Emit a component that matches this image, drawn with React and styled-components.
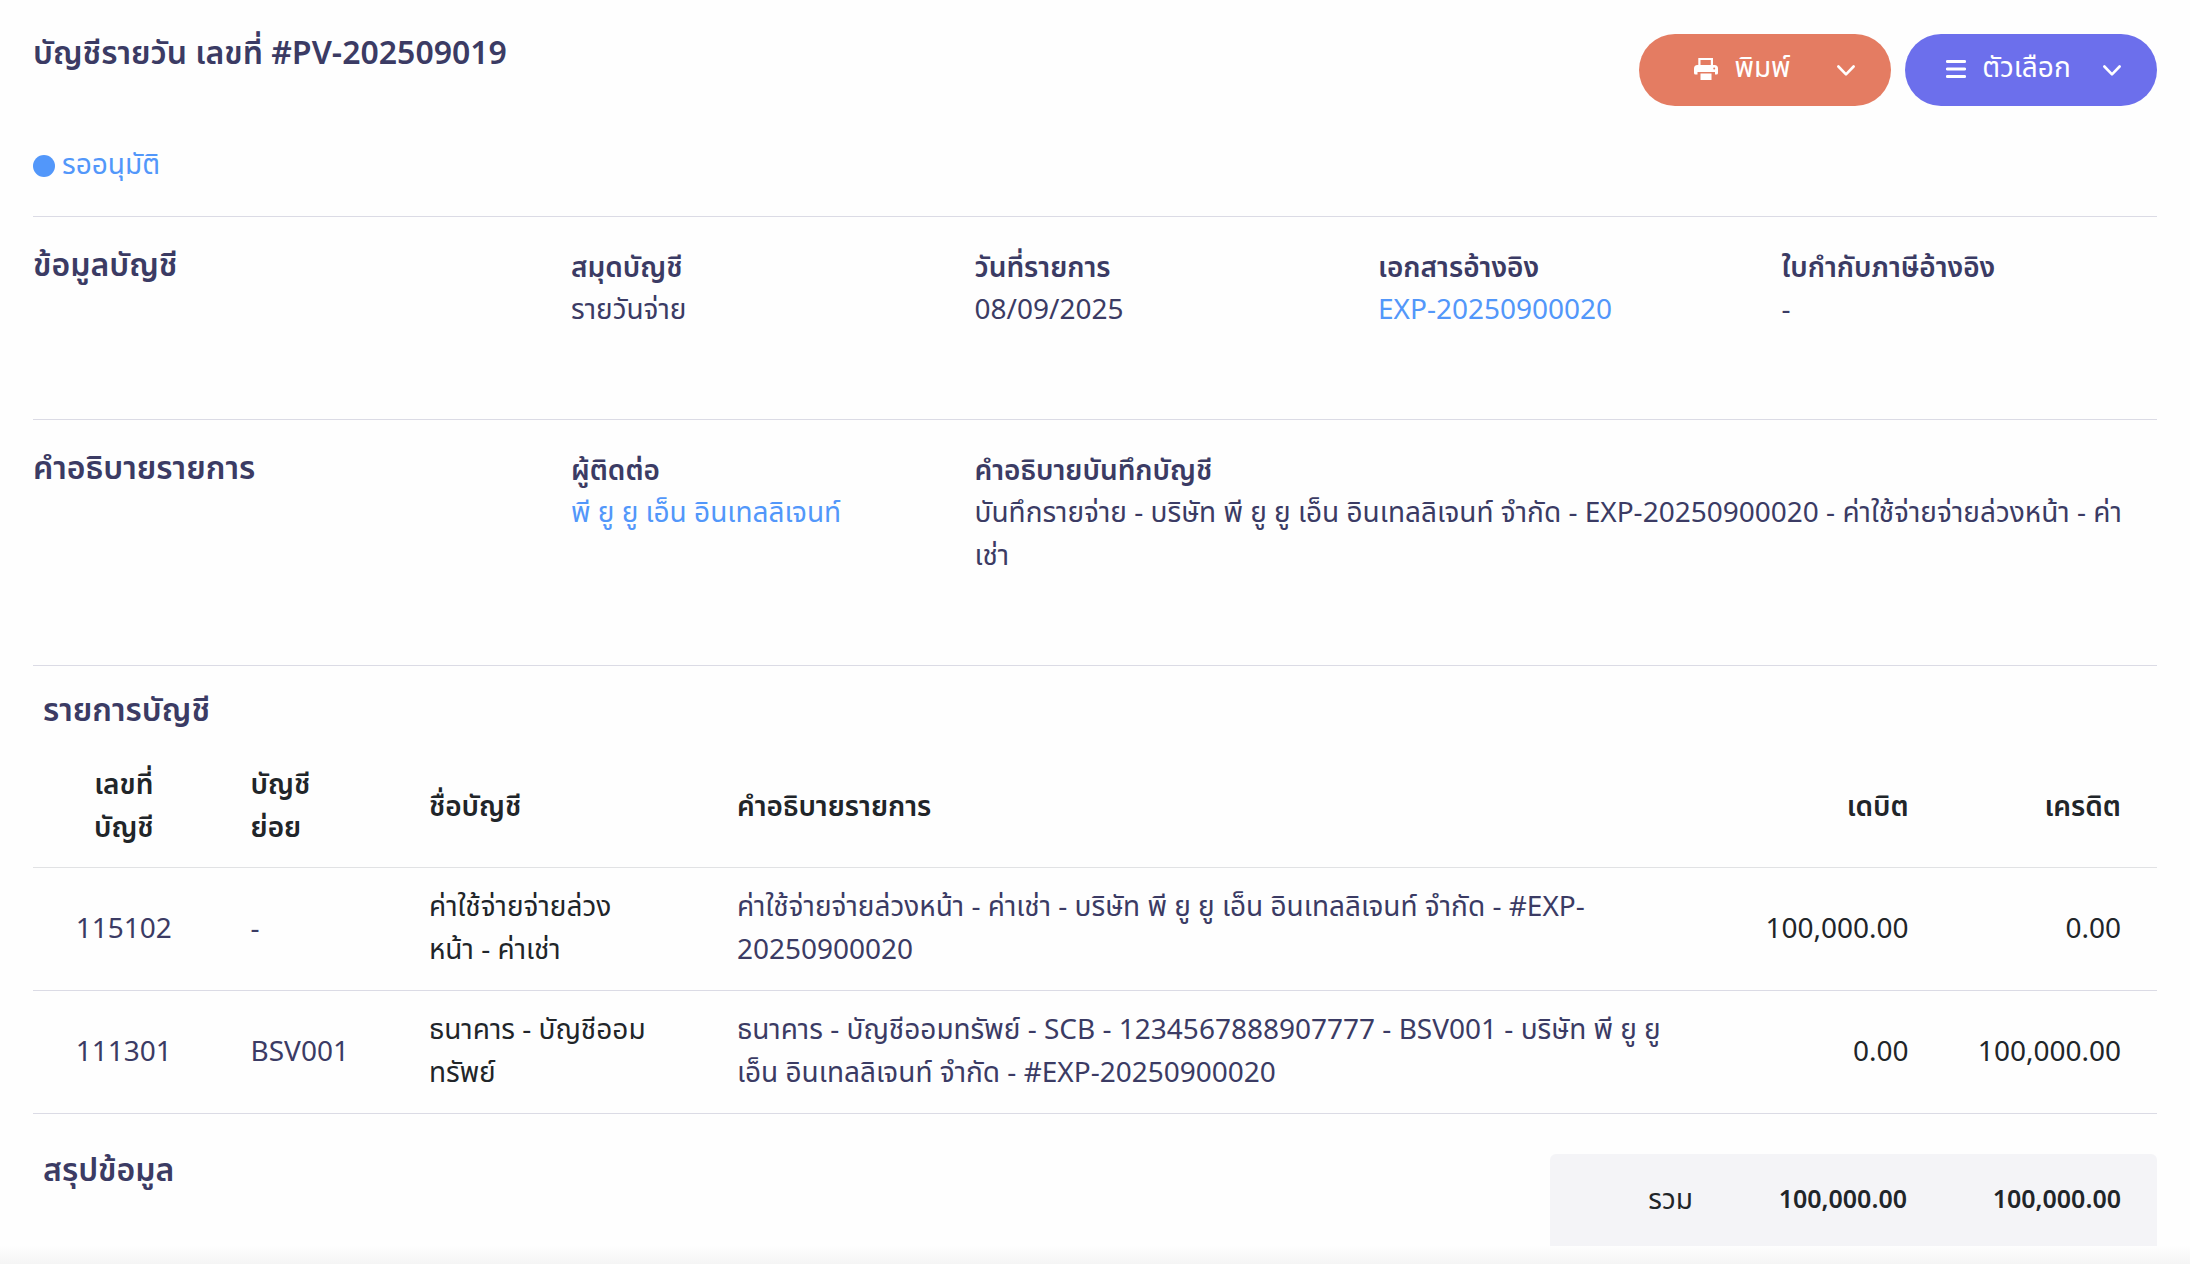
import React from 'react';
import styled, { createGlobalStyle } from 'styled-components';

const fields = [
  { label: 'สมุดบัญชี', value: 'รายวันจ่าย' },
  { label: 'วันที่รายการ', value: '08/09/2025' },
  { label: 'เอกสารอ้างอิง', value: 'EXP-20250900020', link: true },
  { label: 'ใบกำกับภาษีอ้างอิง', value: '-' },
];

const entries = [
  {
    code: '115102',
    sub: '-',
    name: 'ค่าใช้จ่ายจ่ายล่วงหน้า - ค่าเช่า',
    detail:
      'ค่าใช้จ่ายจ่ายล่วงหน้า - ค่าเช่า - บริษัท พี ยู ยู เอ็น อินเทลลิเจนท์ จำกัด - #EXP-20250900020',
    debit: '100,000.00',
    credit: '0.00',
  },
  {
    code: '111301',
    sub: 'BSV001',
    name: 'ธนาคาร - บัญชีออมทรัพย์',
    detail:
      'ธนาคาร - บัญชีออมทรัพย์ - SCB - 1234567888907777 - BSV001 - บริษัท พี ยู ยู เอ็น อินเทลลิเจนท์ จำกัด - #EXP-20250900020',
    debit: '0.00',
    credit: '100,000.00',
  },
];

const PrintIcon = () => (
  <svg width="24" height="22" viewBox="0 0 24 22" aria-hidden="true">
    <path
      fill="currentColor"
      fillRule="evenodd"
      d="M4.3 0H19v7h-2.200V2H6.500v5H4.300zM3.500 7h17A3.500 3.500 0 0 1 24 10.500V15a1.500 1.500 0 0 1-1.500 1.500H21V14H3.500v2.500h-2A1.500 1.500 0 0 1 0 15v-4.500A3.500 3.500 0 0 1 3.500 7zm16.700 2.500a1 1 0 1 0 0 2 1 1 0 0 0 0-2zM6.500 15.500h11V22h-11z"
    />
  </svg>
);

const MenuIcon = () => (
  <svg width="20" height="18" viewBox="0 0 20 18" aria-hidden="true">
    <path
      d="M1.3 1.5h17.400M1.300 9h17.400M1.300 16.500h17.400"
      stroke="currentColor"
      strokeWidth="2.8"
      strokeLinecap="round"
    />
  </svg>
);

const ChevronIcon = () => (
  <svg width="18" height="11" viewBox="0 0 18 11" aria-hidden="true">
    <path
      d="M1.4 1.5 9 9.3l7.6-7.8"
      fill="none"
      stroke="currentColor"
      strokeWidth="2.6"
      strokeLinecap="round"
      strokeLinejoin="round"
    />
  </svg>
);

const App = () => (
  <>
    <GlobalStyle />
    <Page>
      <Header>
        <Title>บัญชีรายวัน เลขที่ #PV-202509019</Title>
        <Actions>
          <ActionButton type="button" $color="#e47c62">
            <ActionText>
              <PrintIcon />
              พิมพ์
            </ActionText>
            <ChevronIcon />
          </ActionButton>
          <ActionButton type="button" $color="#6c6fec">
            <ActionText>
              <MenuIcon />
              ตัวเลือก
            </ActionText>
            <ChevronIcon />
          </ActionButton>
        </Actions>
      </Header>
      <Status>
        <Dot />
        รออนุมัติ
      </Status>
      <Section>
        <SectionTitle>ข้อมูลบัญชี</SectionTitle>
        {fields.map((field) => (
          <Field key={field.label}>
            <Label>{field.label}</Label>
            <Value>{field.link ? <Link href="#">{field.value}</Link> : field.value}</Value>
          </Field>
        ))}
      </Section>
      <Section>
        <SectionTitle>คำอธิบายรายการ</SectionTitle>
        <Field>
          <Label>ผู้ติดต่อ</Label>
          <Value>
            <Link href="#">พี ยู ยู เอ็น อินเทลลิเจนท์</Link>
          </Value>
        </Field>
        <Field $span={3}>
          <Label>คำอธิบายบันทึกบัญชี</Label>
          <Value>
            บันทึกรายจ่าย - บริษัท พี ยู ยู เอ็น อินเทลลิเจนท์ จำกัด - EXP-20250900020 -
            ค่าใช้จ่ายจ่ายล่วงหน้า - ค่าเช่า
          </Value>
        </Field>
      </Section>
      <Entries>
        <TableTitle>รายการบัญชี</TableTitle>
        <Table>
          <thead>
            <tr>
              <HeadCell $width="8.5%" $align="center">เลขที่บัญชี</HeadCell>
              <HeadCell $width="8.4%">บัญชีย่อย</HeadCell>
              <HeadCell $width="14.5%">ชื่อบัญชี</HeadCell>
              <HeadCell>คำอธิบายรายการ</HeadCell>
              <HeadCell $width="10%" $align="right">เดบิต</HeadCell>
              <HeadCell $width="10%" $align="right">เครดิต</HeadCell>
            </tr>
          </thead>
          <tbody>
            {entries.map((entry) => (
              <tr key={entry.code}>
                <Cell $align="center" $accent>{entry.code}</Cell>
                <Cell $accent>{entry.sub}</Cell>
                <NameCell>{entry.name}</NameCell>
                <Cell $accent>{entry.detail}</Cell>
                <Cell $align="right">{entry.debit}</Cell>
                <Cell $align="right">{entry.credit}</Cell>
              </tr>
            ))}
          </tbody>
        </Table>
      </Entries>
      <Summary>
        <TableTitle>สรุปข้อมูล</TableTitle>
        <Totals>
          <span>รวม</span>
          <Total>100,000.00</Total>
          <Total>100,000.00</Total>
        </Totals>
      </Summary>
      <BottomShade />
    </Page>
  </>
);

const GlobalStyle = createGlobalStyle`
  * {
    box-sizing: border-box;
  }
  body {
    margin: 0;
    background: #fefefe;
    color: #212529;
    font-family: "Noto Sans Thai", "Noto Sans", sans-serif;
    font-size: 28px;
    font-weight: 400;
    line-height: 43px;
  }
`;
const Page = styled.main`
  padding: 34px 33px 0;
`;
const Header = styled.header`
  display: flex;
  justify-content: space-between;
  align-items: flex-start;
`;
const Title = styled.h1`
  margin: 0;
  color: #3b3b64;
  font-size: 32px;
  font-weight: 600;
  line-height: 40px;
`;
const Actions = styled.div`
  display: flex;
  gap: 14px;
`;
const ActionButton = styled.button`
  display: flex;
  align-items: center;
  width: 252px;
  height: 72px;
  padding: 0 36px 0 9px;
  border: 0;
  border-radius: 36px;
  background: ${(props) => props.$color};
  color: #fff;
  font: inherit;
  cursor: pointer;
`;
const ActionText = styled.span`
  display: flex;
  flex: 1;
  align-items: center;
  justify-content: center;
  gap: 16px;
  padding-bottom: 3px;
`;
const Status = styled.p`
  display: flex;
  align-items: center;
  gap: 7px;
  margin: 0;
  padding: 38px 0 29px;
  color: #5297fa;
`;
const Dot = styled.span`
  width: 22px;
  height: 22px;
  border-radius: 50%;
  background: #5297fa;
`;
const Section = styled.section`
  display: grid;
  grid-template-columns: 4fr 3fr 3fr 3fr 3fr;
  position: relative;
  margin-right: -28px;
  padding: 32px 0 87px;
  color: #3b3b64;
  &::before {
    content: '';
    position: absolute;
    top: 0;
    left: 0;
    right: 28px;
    border-top: 1px solid #dbdbe5;
  }
`;
const SectionTitle = styled.h2`
  margin: 0;
  font-size: 32px;
  font-weight: 600;
  line-height: 36px;
`;
const Field = styled.div`
  grid-column: span ${(props) => props.$span || 1};
  padding-right: 36px;
`;
const Label = styled.div`
  font-weight: 600;
  line-height: 41px;
`;
const Value = styled.div``;
const Link = styled.a`
  color: #5297fa;
  text-decoration: none;
`;
const Entries = styled.section`
  padding-top: 28px;
  border-top: 1px solid #dbdbe5;
`;
const TableTitle = styled.h2`
  margin: 0;
  padding-left: 10px;
  color: #3b3b64;
  font-size: 32px;
  font-weight: 600;
  line-height: 34px;
`;
const Table = styled.table`
  width: 100%;
  table-layout: fixed;
  border-collapse: collapse;
`;
const HeadCell = styled.th`
  width: ${(props) => props.$width || 'auto'};
  padding: 36px 36px 17px ${(props) => (props.$align === 'right' ? 18 : 37)}px;
  border-bottom: 1px solid #e1e2e4;
  font-weight: 600;
  text-align: ${(props) => props.$align || 'left'};
`;
const Cell = styled.td`
  padding: 18px 36px 18px ${(props) => (props.$align === 'right' ? 18 : 37)}px;
  border-bottom: 1px solid #dbdbe5;
  color: ${(props) => (props.$accent ? '#3b3b64' : 'inherit')};
  text-align: ${(props) => props.$align || 'left'};
`;
const NameCell = styled(Cell)`
  padding-right: 48px;
`;
const Summary = styled.section`
  display: flex;
  justify-content: space-between;
  align-items: flex-start;
  padding-top: 40px;
`;
const Totals = styled.div`
  display: grid;
  grid-template-columns: 1fr 214px 214px;
  align-items: center;
  width: 607px;
  height: 92px;
  padding-right: 36px;
  border-radius: 6px 6px 0 0;
  background: #f4f4f7;
  text-align: right;
`;
const Total = styled.strong`
  font-size: 25px;
  font-weight: 600;
`;
const BottomShade = styled.div`
  height: 18px;
  margin: 0 -33px;
  background: linear-gradient(#fefefe, #f5f5f5);
`;

export default App;
